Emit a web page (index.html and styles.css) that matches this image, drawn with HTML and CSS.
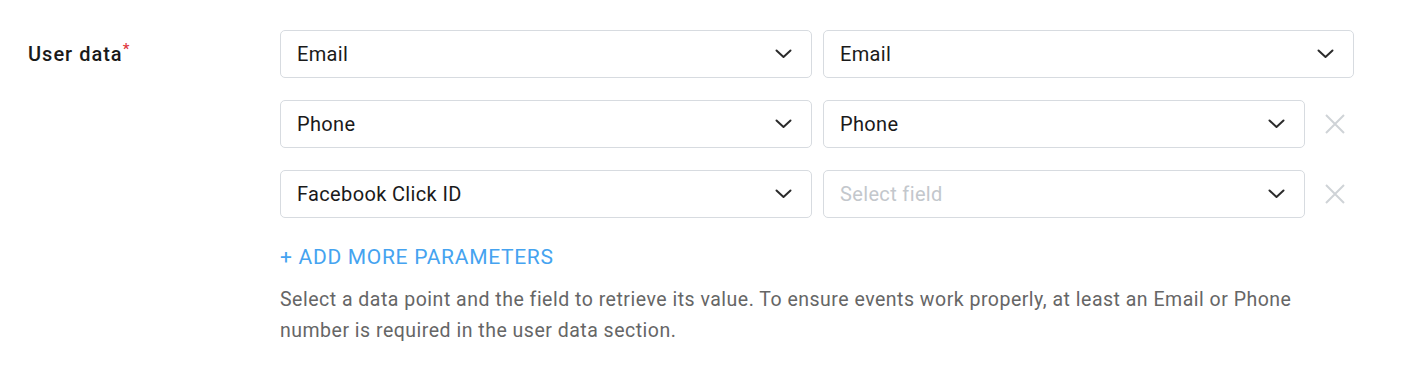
FILE: index.html
```html
<!DOCTYPE html>
<html lang="en">
<head>
  <meta charset="UTF-8" />
  <meta name="viewport" content="width=device-width, initial-scale=1.0" />
  <title>User data</title>
  <link rel="stylesheet" href="styles.css">
</head>
<body>
  <div class="field">
    <div class="field-label">User data<span class="req">*</span></div>
    <div class="field-body">
      <div class="param-rows">
        <div class="param-row">
          <div class="select"><span>Email</span><svg class="chevron" width="17" height="10" viewBox="0 0 17 10"><path d="M1.5 1.5 L8.5 8 L15.5 1.5" /></svg></div>
          <div class="value-cell">
            <div class="select"><span>Email</span><svg class="chevron" width="17" height="10" viewBox="0 0 17 10"><path d="M1.5 1.5 L8.5 8 L15.5 1.5" /></svg></div>
          </div>
        </div>
        <div class="param-row">
          <div class="select"><span>Phone</span><svg class="chevron" width="17" height="10" viewBox="0 0 17 10"><path d="M1.5 1.5 L8.5 8 L15.5 1.5" /></svg></div>
          <div class="value-cell">
            <div class="select"><span>Phone</span><svg class="chevron" width="17" height="10" viewBox="0 0 17 10"><path d="M1.5 1.5 L8.5 8 L15.5 1.5" /></svg></div>
            <button class="remove" title="Remove"><svg width="22" height="22" viewBox="0 0 22 22"><path d="M2 2 L20 20 M20 2 L2 20" /></svg></button>
          </div>
        </div>
        <div class="param-row">
          <div class="select"><span>Facebook Click ID</span><svg class="chevron" width="17" height="10" viewBox="0 0 17 10"><path d="M1.5 1.5 L8.5 8 L15.5 1.5" /></svg></div>
          <div class="value-cell">
            <div class="select"><span class="placeholder">Select field</span><svg class="chevron" width="17" height="10" viewBox="0 0 17 10"><path d="M1.5 1.5 L8.5 8 L15.5 1.5" /></svg></div>
            <button class="remove" title="Remove"><svg width="22" height="22" viewBox="0 0 22 22"><path d="M2 2 L20 20 M20 2 L2 20" /></svg></button>
          </div>
        </div>
      </div>
      <a class="add-link" href="#">+ ADD MORE PARAMETERS</a>
      <p class="help">Select a data point and the field to retrieve its value. To ensure events work properly, at least an Email or Phone number is required in the user data section.</p>
    </div>
  </div>
</body>
</html>
```

FILE: styles.css
```css
body {
  margin: 0;
  font-family: Roboto, "Noto Sans", sans-serif;
  color: #1f1f1f;
  background: #fff;
}
.field {
  display: flex;
  padding: 30px 0 0 28px;
}
.field-label {
  width: 252px;
  height: 48px;
  display: flex;
  align-items: center;
  font-size: 20px;
  font-weight: 500;
  letter-spacing: 1px;
  color: #1a1a1a;
}
.req {
  color: #e0393e;
  font-size: 15px;
  align-self: flex-start;
  margin-top: 10px;
}
.field-body {
  width: 1074px;
}
.param-rows {
  display: flex;
  flex-direction: column;
  gap: 22px;
}
.param-row {
  display: grid;
  grid-template-columns: 532px 531px;
  column-gap: 11px;
}
.select {
  height: 48px;
  box-sizing: border-box;
  border: 1px solid #d7dbe0;
  border-radius: 5px;
  display: flex;
  align-items: center;
  justify-content: space-between;
  padding: 0 19px 0 16px;
  font-size: 20px;
  letter-spacing: 0.35px;
  color: #1a1a1a;
}
.placeholder {
  color: #c3c7cc;
}
.chevron path {
  fill: none;
  stroke: #2b2b2b;
  stroke-width: 2;
  stroke-linecap: round;
  stroke-linejoin: round;
}
.value-cell {
  display: flex;
}
.value-cell .select {
  flex: 1;
}
.remove {
  width: 49px;
  flex: none;
  display: flex;
  align-items: center;
  border: 0;
  padding: 0 0 0 19px;
  background: none;
  cursor: pointer;
}
.remove path {
  stroke: #cfd3d7;
  stroke-width: 2;
  fill: none;
}
.add-link {
  display: block;
  margin-top: 27px;
  line-height: 24px;
  font-size: 21px;
  letter-spacing: 0.7px;
  color: #45a3f0;
  text-decoration: none;
}
.help {
  margin: 15px 0 0;
  font-size: 19.5px;
  letter-spacing: 0.5px;
  line-height: 31px;
  color: #666;
  width: 1040px;
}
```
